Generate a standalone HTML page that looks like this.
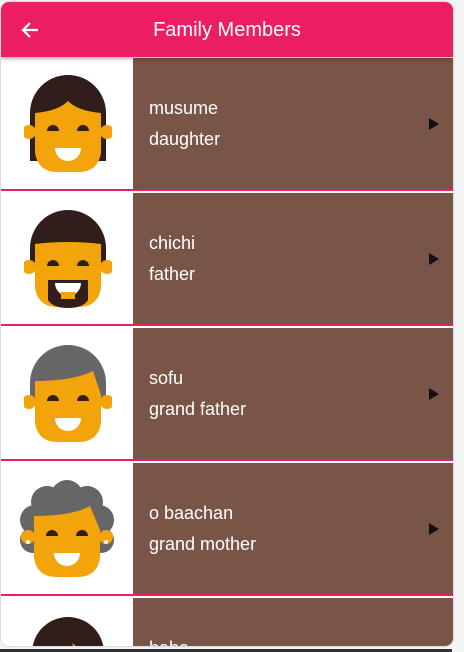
<!DOCTYPE html>
<html style="overflow:hidden"><head><meta charset="utf-8"><style>
*{margin:0;padding:0;box-sizing:border-box}
html,body{width:464px;height:652px;overflow:hidden}
body{background:#f4f4f4;position:relative;font-family:"Liberation Sans",sans-serif}
#app{position:absolute;left:1px;top:2px;width:452px;height:644px;background:#fff;border-radius:8px;overflow:hidden;box-shadow:0 0 2px rgba(0,0,0,.3)}
#hdr{position:absolute;left:0;top:0;width:452px;height:55px;background:#ec1e63;box-shadow:0 2px 4px rgba(0,0,0,.3);z-index:2}
#hdr .t{position:absolute;left:0;width:452px;top:17px;text-align:center;color:#fff;font-size:20px}
.row{position:absolute;left:0;width:452px;height:133px;border-bottom:2px solid #ec1e63}
.brown{position:absolute;left:132px;top:0;right:0;height:131px;background:#795548}
.l1,.l2{position:absolute;left:148px;color:#fff;font-size:18px}
.l1{top:40px}.l2{top:71px}
.tri{position:absolute;left:428px;top:60px;width:0;height:0;border-top:6px solid transparent;border-bottom:6px solid transparent;border-left:10px solid #111}
.face{position:absolute;left:23px;top:17px}
#bot{position:absolute;left:0;top:649px;width:452px;height:3px;background:#2d3236}
</style></head><body>
<div id="app">
<div id="hdr"><svg style="position:absolute;left:20px;top:19px" width="18" height="18" viewBox="0 0 18 18"><path d="M17 9H3M9 2L2 9l7 7" stroke="#fff" stroke-width="2.2" fill="none"/></svg><div class="t">Family Members</div></div>

<div class="row" style="top:56px">
<svg class="face" width="88" height="100" viewBox="-4 0 88 100">
<circle cx="40" cy="38" r="38" fill="#311e1b"/><rect x="2" y="38" width="76" height="48" fill="#311e1b"/>
<circle cx="1" cy="57" r="7" fill="#f4a40b"/><circle cx="79" cy="57" r="7" fill="#f4a40b"/>
<path d="M7,38 Q30,36 40,26 Q50,36 73,38 L73,78 Q70,97 50,97 L30,97 Q10,97 7,78Z" fill="#f4a40b"/>
<path d="M19,56a6,6 0 0 1 12,0Z M49,56a6,6 0 0 1 12,0Z" fill="#311e1b"/>
<path d="M27,73h26a13,13 0 0 1-26,0Z" fill="#fff"/></svg>
<div class="brown"></div><div class="l1">musume</div><div class="l2">daughter</div><div class="tri"></div></div>

<div class="row" style="top:191px">
<svg class="face" width="88" height="100" viewBox="-4 0 88 100">
<circle cx="40" cy="38" r="38" fill="#311e1b"/><rect x="2" y="38" width="76" height="18" fill="#311e1b"/>
<circle cx="1" cy="57" r="7" fill="#f4a40b"/><circle cx="79" cy="57" r="7" fill="#f4a40b"/>
<path d="M7,34 Q40,30 73,34 L73,78 Q70,97 50,97 L30,97 Q10,97 7,78Z" fill="#f4a40b"/>
<path d="M19,56a6,6 0 0 1 12,0Z M49,56a6,6 0 0 1 12,0Z" fill="#311e1b"/>
<path d="M20,70 L60,70 L60,90 Q55,98 40,98 Q25,98 20,90Z" fill="#311e1b"/>
<path d="M27,73h26a13,13 0 0 1-26,0Z" fill="#fff"/>
<rect x="33" y="82" width="14" height="7" fill="#f4a40b"/></svg>
<div class="brown"></div><div class="l1">chichi</div><div class="l2">father</div><div class="tri"></div></div>

<div class="row" style="top:326px">
<svg class="face" width="88" height="100" viewBox="-4 0 88 100">
<circle cx="40" cy="38" r="38" fill="#666"/><rect x="2" y="38" width="76" height="18" fill="#666"/>
<circle cx="1" cy="57" r="7" fill="#f4a40b"/><circle cx="79" cy="57" r="7" fill="#f4a40b"/>
<path d="M7,36 Q45,36 65,26 L73,50 L73,78 Q70,97 50,97 L30,97 Q10,97 7,78Z" fill="#f4a40b"/>
<path d="M19,56a6,6 0 0 1 12,0Z M49,56a6,6 0 0 1 12,0Z" fill="#311e1b"/>
<path d="M27,73h26a13,13 0 0 1-26,0Z" fill="#fff"/></svg>
<div class="brown"></div><div class="l1">sofu</div><div class="l2">grand father</div><div class="tri"></div></div>

<div class="row" style="top:461px">
<svg class="face" style="left:18px;top:17px" width="96" height="100" viewBox="-8 0 96 100">
<g fill="#666"><circle cx="40" cy="16" r="16"/><circle cx="20" cy="22" r="16"/><circle cx="60" cy="22" r="16"/><circle cx="8" cy="40" r="15"/><circle cx="72" cy="40" r="15"/><circle cx="6" cy="60" r="13"/><circle cx="74" cy="60" r="13"/><circle cx="40" cy="40" r="32"/></g>
<circle cx="1" cy="57" r="7" fill="#f4a40b"/><circle cx="79" cy="57" r="7" fill="#f4a40b"/>
<circle cx="1" cy="62" r="2" fill="#fff"/><circle cx="79" cy="62" r="2" fill="#fff"/>
<path d="M7,36 Q45,36 63,26 L73,50 L73,78 Q70,97 50,97 L30,97 Q10,97 7,78Z" fill="#f4a40b"/>
<path d="M19,56a6,6 0 0 1 12,0Z M49,56a6,6 0 0 1 12,0Z" fill="#311e1b"/>
<path d="M27,73h26a13,13 0 0 1-26,0Z" fill="#fff"/></svg>
<div class="brown"></div><div class="l1">o baachan</div><div class="l2">grand mother</div><div class="tri"></div></div>

<div class="row" style="top:596px">
<svg class="face" width="88" height="100" viewBox="-4 0 88 100">
<circle cx="40" cy="38" r="36" fill="#311e1b"/><path d="M44,28 l10,8 l-6,4z" fill="#f4a40b"/></svg>
<div class="brown"></div><div class="l1">haha</div></div>
</div>
<div id="bot"></div>
</body></html>
